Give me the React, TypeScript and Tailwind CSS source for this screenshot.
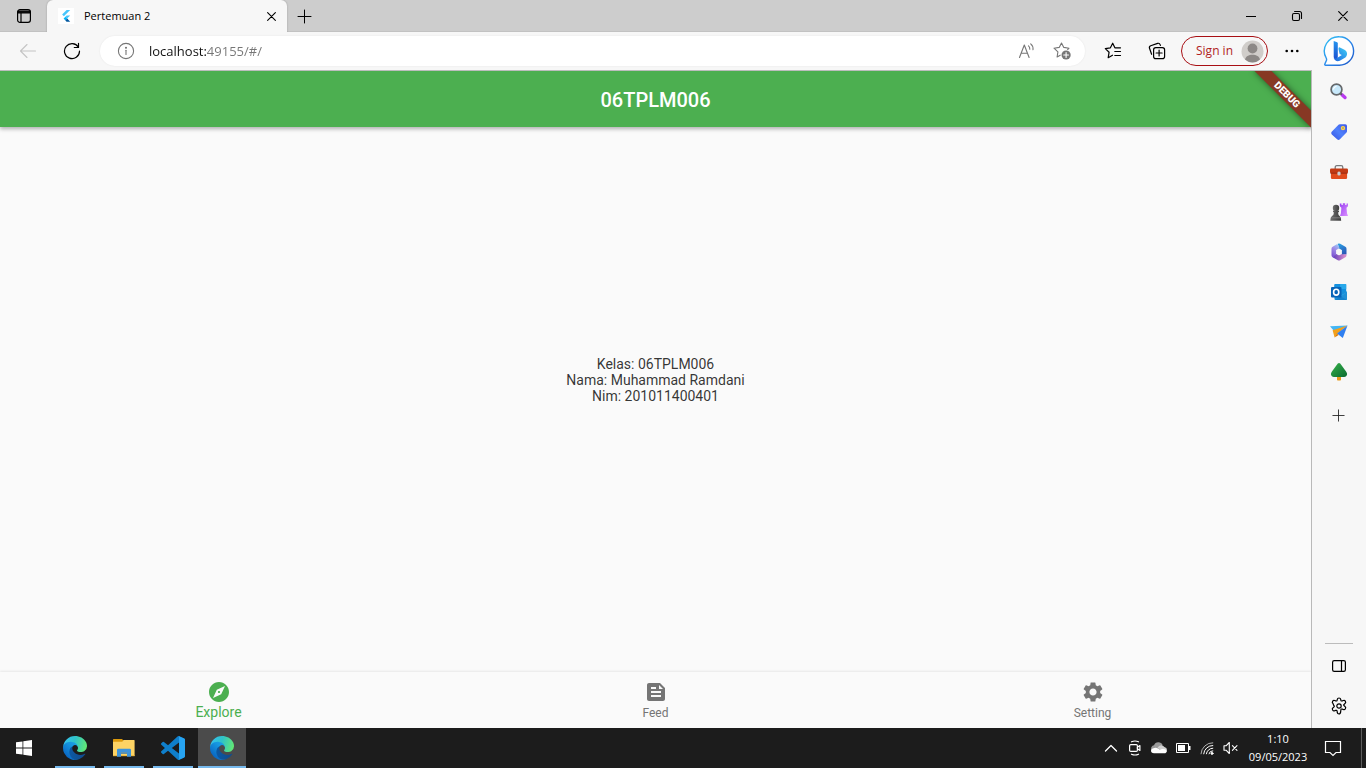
import React, { useState } from "react";
import { MdExplore, MdFeed, MdSettings } from "react-icons/md";

type IconProps = { className?: string };

const line = {
  fill: "none",
  stroke: "currentColor",
  strokeLinecap: "round" as const,
  strokeLinejoin: "round" as const,
};

/* ---------- Browser chrome icons ---------- */

const TabActionsIcon = () => (
  <svg width="16" height="16" viewBox="0 0 16 16" {...line} strokeWidth="1.2">
    <rect x="1.6" y="1.6" width="12.8" height="12.8" rx="2.4" />
    <path d="M2 3.2h12v1.6H2z" fill="currentColor" />
    <path d="M5 5v9" />
  </svg>
);

const FlutterIcon = () => (
  <svg width="16" height="16" viewBox="0 0 16 16">
    <rect width="16" height="16" fill="#fff" />
    <path d="M8.6 2h3.6L5.9 8.3 4.1 6.5z" fill="#47c5fb" />
    <path d="M8.6 7.5h3.6L9.1 10.6l-1.8-1.8z" fill="#47c5fb" />
    <path d="M5.6 10.6l1.8-1.8 1.8 1.8-1.8 1.8z" fill="#00b5f8" />
    <path d="M7.4 12.4l1.8-1.8 3 3.1H8.6z" fill="#00569e" />
  </svg>
);

const CloseIcon = ({ className }: IconProps) => (
  <svg className={className} viewBox="0 0 10 10" {...line} strokeWidth="1.2">
    <path d="M.7.7l8.6 8.6M9.3.7L.7 9.3" />
  </svg>
);

const PlusIcon = ({ className }: IconProps) => (
  <svg className={className} viewBox="0 0 15 15" {...line} strokeWidth="1">
    <path d="M7.5 1v13M1 7.5h13" />
  </svg>
);

const MinimizeIcon = () => (
  <svg width="10" height="10" viewBox="0 0 10 10" {...line}>
    <path d="M0 5.5h10" />
  </svg>
);

const RestoreIcon = () => (
  <svg width="12" height="12" viewBox="0 0 12 12" {...line} strokeWidth="1.1">
    <rect x="1.5" y="3.5" width="7" height="7" rx="1.4" />
    <path d="M3.6 1.5h4.9a2 2 0 0 1 2 2v4.9" />
  </svg>
);

const BackIcon = () => (
  <svg width="18" height="16" viewBox="0 0 18 16" {...line} strokeWidth="1.1">
    <path d="M16.5 8H1.5M8 1.5L1.5 8 8 14.5" />
  </svg>
);

const ReloadIcon = () => (
  <svg width="18" height="18" viewBox="0 0 18 18" {...line} strokeWidth="1.2">
    <path d="M16.5 9.2A7.500 7.500 0 1 1 15.400 5.200" />
    <path d="M15.500 1.300v4.200h-4.200" />
  </svg>
);

const InfoIcon = () => (
  <svg width="18" height="18" viewBox="0 0 18 18" {...line} strokeWidth="1.1">
    <circle cx="9" cy="9" r="7.6" />
    <path d="M9 8.2v4.3" />
    <circle cx="9" cy="5.7" r=".5" fill="currentColor" />
  </svg>
);

const ReadAloudIcon = () => (
  <svg width="18" height="18" viewBox="0 0 18 18" {...line} strokeWidth="1.1">
    <path d="M2.500 15.500L7.300 3l4.800 12.500M4.200 11.200h6.200" />
    <path d="M11.500 3.900a4 4 0 0 1 1.300 3.300M13.700 1.900a6.500 6.500 0 0 1 2.300 5.800" />
  </svg>
);

const AddFavoriteIcon = () => (
  <svg width="18" height="18" viewBox="0 0 18 18" {...line} strokeWidth="1.1">
    <path d="M7.200 13.200L4.100 15l.8-5.200L1 6.200l5.200-.8L8.500 1l2.300 4.400 5.200.8-1.300 1.300" />
    <circle cx="13.100" cy="13" r="4.600" fill="currentColor" stroke="none" />
    <path d="M13.100 10.600v4.800M10.700 13h4.800" stroke="#fff" />
  </svg>
);

const FavoritesIcon = () => (
  <svg width="18" height="18" viewBox="0 0 18 18" {...line} strokeWidth="1.2">
    <path d="M8.500 13.200L4.200 15.700l.9-5.500L1.300 6.600l5.100-.8L8.700 1.200l2.200 4.600h5.600" />
    <path d="M10.800 9.500h5.700M10.800 13.500h5.700" />
  </svg>
);

const CollectionsIcon = () => (
  <svg width="18" height="18" viewBox="0 0 18 18" {...line} strokeWidth="1.2">
    <rect x="5.600" y="5.600" width="11" height="11" rx="2.200" />
    <path d="M11.100 8v6M8.100 11h6" />
    <path d="M3.600 12.300L1.500 6.200a2 2 0 0 1 1.200-2.500l6.900-2.300a2 2 0 0 1 2.500 1.200l.3.800" />
  </svg>
);

const AvatarIcon = () => (
  <svg width="23" height="23" viewBox="0 0 23 23">
    <circle cx="11.500" cy="11.500" r="11" fill="#d0cdca" />
    <circle cx="11.500" cy="8.500" r="4.900" fill="#8c8886" />
    <path d="M4 19.600c.7-3.400 3.700-4.900 7.500-4.900s6.800 1.500 7.500 4.900a11 11 0 0 1-15 0z" fill="#8c8886" />
  </svg>
);

const MoreIcon = () => (
  <svg width="16" height="4" viewBox="0 0 16 4" fill="currentColor">
    <circle cx="2.700" cy="2" r="1.300" />
    <circle cx="8" cy="2" r="1.300" />
    <circle cx="13.300" cy="2" r="1.300" />
  </svg>
);

/* ---------- Edge sidebar icons ---------- */

const BingIcon = () => (
  <svg width="32" height="32" viewBox="0 0 32 32">
    <defs>
      <linearGradient id="bingRing" x1="0" y1="0" x2="1" y2="1">
        <stop offset="0" stopColor="#2fc3f4" />
        <stop offset=".55" stopColor="#2a86ea" />
        <stop offset="1" stopColor="#1b52c4" />
      </linearGradient>
      <linearGradient id="bingStem" x1="0" y1="0" x2="0" y2="1">
        <stop offset="0" stopColor="#2595ee" />
        <stop offset="1" stopColor="#1b4fd0" />
      </linearGradient>
      <linearGradient id="bingBowl" x1="1" y1="0" x2="0" y2="1">
        <stop offset="0" stopColor="#3fd0f5" />
        <stop offset="1" stopColor="#1e63e0" />
      </linearGradient>
    </defs>
    <path
      d="M16.300 1.700A14.300 14.300 0 1 1 16.300 30.300H2.600c-.8 0-1.100-.8-.7-1.400l1.500-3.400c.4-.8.300-1.500-.2-2.500A14.300 14.300 0 0 1 16.300 1.700z"
      fill="#fff"
      stroke="url(#bingRing)"
      strokeWidth="1.400"
    />
    <path d="M10.700 6l3.400 1.200q.7.400.7 1.200v14.100l-1.300 2.200q-2.800-.5-2.800-3.200z" fill="url(#bingStem)" />
    <path d="M16.400 12.300l4.600 2.300c3.400 1.700 4.200 5.400 1.400 7.900l-5.600 3.300c-2.500 1-5.300.1-6.100-2.700 2 1.100 3.300.2 4.200-.6l3.900-2.500-1.500-.7q-.6-.2-.8-.8l-1-4.600q-.2-1.600.900-1.600z" fill="url(#bingBowl)" />
  </svg>
);

const SearchToolIcon = () => (
  <svg width="20" height="20" viewBox="0 0 20 20">
    <path d="M13 12.800l3 2.700" stroke="#b93bf0" strokeWidth="3.400" strokeLinecap="round" />
    <path d="M11 11l1.800 1.700" stroke="#555" strokeWidth="1.800" />
    <circle cx="7.500" cy="7.500" r="5.400" fill="#c8e9fb" stroke="#66696c" strokeWidth="1.700" />
    <path d="M4.500 7.500a3 3 0 0 1 3-3" stroke="#fff" strokeWidth="1.200" fill="none" />
  </svg>
);

const ShoppingIcon = () => (
  <svg width="20" height="20" viewBox="0 0 20 20">
    <defs>
      <linearGradient id="tag" x1="1" y1="0" x2="0" y2="1">
        <stop offset="0" stopColor="#3d58e8" />
        <stop offset=".5" stopColor="#4f80fb" />
        <stop offset="1" stopColor="#3451e3" />
      </linearGradient>
    </defs>
    <path d="M10.800 2.200h5.500q1.700 0 1.700 1.700v5.300q0 .7-.5 1.200l-6.600 6.900q-1.200 1.200-2.500.2l-5.600-5.100q-1.300-1.300-.1-2.600L9.500 2.800q.6-.6 1.300-.6z" fill="url(#tag)" />
    <circle cx="14" cy="6.100" r="1.500" fill="#7a7f9a" stroke="#ffd447" strokeWidth="1.400" />
  </svg>
);

const ToolsIcon = () => (
  <svg width="20" height="20" viewBox="0 0 20 20">
    <path d="M6.200 7V5.400q0-1.700 1.600-1.700h4.400q1.600 0 1.600 1.700V7" fill="none" stroke="#77787b" strokeWidth="1.300" />
    <rect x="1.900" y="10" width="16.200" height="7" rx="1.200" fill="#e04b1c" />
    <rect x="1" y="6.500" width="18" height="4.800" rx="1.200" fill="#c23a14" />
    <path d="M1.500 11.200h17" stroke="#8f260c" strokeWidth=".8" />
    <rect x="8.400" y="9.400" width="3.200" height="4.200" rx="1.500" fill="#c9cdd2" />
  </svg>
);

const GamesIcon = () => (
  <svg width="20" height="20" viewBox="0 0 20 20">
    <defs>
      <linearGradient id="rook" x1="0" y1="0" x2="1" y2="1">
        <stop offset="0" stopColor="#9a3ff2" />
        <stop offset="1" stopColor="#dc93ff" />
      </linearGradient>
      <linearGradient id="pawn" x1="0" y1="0" x2="1" y2="0">
        <stop offset="0" stopColor="#707070" />
        <stop offset="1" stopColor="#3c3c3c" />
      </linearGradient>
    </defs>
    <path d="M10.800 1.600h1.700v1.400h1.300V1.200h2.400V3h1.300V1.600H19v2.600l-1.500 1.500.5 5.600 1 2.700h-8l.9-2.700.5-5.600-1.600-1.500z" fill="url(#rook)" />
    <circle cx="7" cy="6" r="3.200" fill="url(#pawn)" />
    <path d="M4 8.700h6v1.500H9q.2 2.800 1.600 3.900 1.600 1.300 1.600 4.600H1.300q0-3.300 1.700-4.600Q4.800 13 5 10.200H4z" fill="url(#pawn)" />
    <path d="M2.500 15.800h8.800" stroke="#8a8a8a" strokeWidth=".8" />
  </svg>
);

const OfficeIcon = () => (
  <svg width="20" height="20" viewBox="0 0 20 20" fill="none" strokeWidth="4.600" strokeLinejoin="round">
    <defs>
      <linearGradient id="m365a" x1="3" y1="14" x2="11" y2="3" gradientUnits="userSpaceOnUse">
        <stop offset="0" stopColor="#7b52d0" />
        <stop offset=".5" stopColor="#9d87e6" />
        <stop offset="1" stopColor="#9fd0f8" />
      </linearGradient>
      <linearGradient id="m365b" x1="9" y1="3" x2="16" y2="16" gradientUnits="userSpaceOnUse">
        <stop offset="0" stopColor="#2a9be0" />
        <stop offset="1" stopColor="#2b3ea8" />
      </linearGradient>
      <linearGradient id="m365c" x1="4" y1="14" x2="16" y2="14" gradientUnits="userSpaceOnUse">
        <stop offset="0" stopColor="#5f3dbb" />
        <stop offset="1" stopColor="#d58bcb" />
      </linearGradient>
    </defs>
    <path d="M15.200 12.200v1L10 16.200l-5.200-3" stroke="url(#m365c)" />
    <path d="M9.600 4L10 3.800l5.200 3v5.400" stroke="url(#m365b)" />
    <path d="M5.600 13.600l-.8-.4V6.800l4.600-2.700" stroke="url(#m365a)" />
  </svg>
);

const OutlookIcon = () => (
  <svg width="20" height="20" viewBox="0 0 20 20">
    <rect x="5.200" y="2" width="12" height="10" rx="1" fill="#1490df" />
    <path d="M11.200 2h6v5h-6z" fill="#28a8ea" />
    <path d="M5.500 9.500H18V17q0 1-1 1H6.500q-1 0-1-1z" fill="#1a8fd8" />
    <path d="M18 10v8l-7-4z" fill="#37b5f0" />
    <path d="M6 18l12-8v7q0 1-1 1z" fill="#1278c4" opacity=".6" />
    <rect x="2" y="5" width="10.500" height="10.500" rx="1" fill="#0864b8" />
    <ellipse cx="7.200" cy="10.200" rx="2.600" ry="2.900" fill="none" stroke="#fff" strokeWidth="1.600" />
  </svg>
);

const DropIcon = () => (
  <svg width="20" height="20" viewBox="0 0 20 20">
    <path d="M1 4.300L18.500 3.500 6 10.300z" fill="#43b6f5" />
    <path d="M3.600 8.300L18.500 3.500 8 12 5.600 15.500z" fill="#f2a01c" />
    <path d="M8 11.600L18.500 3.500 13.800 16z" fill="#2f7ff0" />
    <path d="M5.600 15.500L9.600 12.900 8 11.400z" fill="#d97706" />
  </svg>
);

const TreeIcon = () => (
  <svg width="20" height="20" viewBox="0 0 20 20">
    <defs>
      <linearGradient id="tree" x1="0" y1="0" x2="1" y2="1">
        <stop offset="0" stopColor="#37b34a" />
        <stop offset="1" stopColor="#0b6b31" />
      </linearGradient>
    </defs>
    <rect x="8" y="13" width="4" height="5.500" rx=".8" fill="#e79b1c" />
    <path d="M8.600 1.700q1.400-1.300 2.800 0l6 8.300q1.500 2.600-.3 4.200-.8.700-2 .7H4.900q-1.200 0-2-.7-1.800-1.600-.3-4.200z" fill="url(#tree)" />
  </svg>
);

const PanelIcon = () => (
  <svg width="16" height="16" viewBox="0 0 16 16" {...line} strokeWidth="1.200">
    <rect x="1.600" y="2.600" width="12.800" height="10.800" rx="1.600" />
    <path d="M10.500 3v10" />
  </svg>
);

const GearIcon = () => (
  <svg width="18" height="18" viewBox="0 0 18 18" {...line} strokeWidth="1.200">
    <path d="M7.300 2.300Q7.500 1 9 1t1.700 1.300l.2 1q.3 1 1.400.6l1-.4q1.300-.5 2.100.8t-.4 2.200l-.8.7q-1 .8 0 1.600l.8.7q1.200.9.400 2.200t-2.100.8l-1-.4q-1.100-.4-1.400.6l-.2 1.700Q10.500 17 9 17t-1.700-1.300l-.2-1.700q-.3-1-1.400-.6l-1 .4q-1.300.5-2.100-.8t.4-2.200l.8-.7q1-.8 0-1.600L3 6.500q-1.200-.9-.4-2.200t2.100-.8l1 .4q1.100.4 1.400-.6z" />
    <circle cx="9" cy="9" r="2.200" />
  </svg>
);

/* ---------- Taskbar icons ---------- */

const WindowsIcon = () => (
  <svg width="16" height="16" viewBox="0 0 16 16" fill="#fff">
    <path d="M0 2.300L6.500 1.400v6.200H0zM7.300 1.300L16 0v7.600H7.300zM0 8.400h6.500v6.200L0 13.700zM7.300 8.400H16V16l-8.700-1.300z" />
  </svg>
);

const EdgeIcon = ({ id }: { id: string }) => (
  <svg width="24" height="24" viewBox="0 0 256 256">
    <defs>
      <linearGradient id={`${id}-navy`} x1="63" y1="177" x2="241" y2="177" gradientUnits="userSpaceOnUse">
        <stop offset="0" stopColor="#0c59a4" />
        <stop offset="1" stopColor="#114a8b" />
      </linearGradient>
      <linearGradient id={`${id}-blue`} x1="157" y1="100" x2="46" y2="221" gradientUnits="userSpaceOnUse">
        <stop offset="0" stopColor="#1b9de2" />
        <stop offset=".3" stopColor="#1595df" />
        <stop offset="1" stopColor="#0a68c4" />
      </linearGradient>
      <linearGradient id={`${id}-green`} x1="0" y1="60" x2="256" y2="130" gradientUnits="userSpaceOnUse">
        <stop offset="0" stopColor="#35c1f1" />
        <stop offset=".45" stopColor="#2fc2c8" />
        <stop offset="1" stopColor="#66eb6e" />
      </linearGradient>
    </defs>
    <path
      d="M231.070 190.540c-3.380 1.760-6.850 3.350-10.410 4.760a100.200 100.200 0 0 1-35.260 6.360c-46.470 0-86.950-31.970-86.950-72.980A31.270 31.270 0 0 1 114.800 101.600c-42.030 1.770-52.830 45.570-52.830 71.230 0 72.560 66.870 79.920 81.280 79.920 7.770 0 19.480-2.260 26.520-4.490l1.290-.43a128.340 128.340 0 0 0 66.600-52.800 4 4 0 0 0-6.590-4.490z"
      fill={`url(#${id}-navy)`}
    />
    <path
      d="M105.730 241.420a79.200 79.200 0 0 1-22.740-21.340 80.720 80.720 0 0 1 29.530-120c3.120-1.470 8.450-4.130 15.540-4a32.350 32.350 0 0 1 25.690 13 31.880 31.880 0 0 1 6.360 18.660c0-.21 24.460-79.600-80-79.600-43.900 0-80 41.660-80 78.210a130.150 130.150 0 0 0 12.110 56 128 128 0 0 0 156.380 67.110 75.550 75.550 0 0 1-62.780-8z"
      fill={`url(#${id}-blue)`}
    />
    <path
      d="M152.330 148.860c-.81 1.050-3.300 2.500-3.300 5.660 0 2.610 1.700 5.120 4.720 7.230 14.380 10 41.490 8.680 41.560 8.680a59.560 59.560 0 0 0 30.270-8.350A61.380 61.380 0 0 0 256 109.160c.26-22.410-8-37.310-11.340-43.910C223.460 23.840 177.720 0 128 0A128 128 0 0 0 0 126.200c.48-36.540 36.800-66.050 80-66.050 3.500 0 23.460.34 42 10.070 16.340 8.580 24.900 18.940 30.850 29.210 6.180 10.670 7.280 24.150 7.280 29.520 0 5.370-2.740 13.330-7.800 19.910z"
      fill={`url(#${id}-green)`}
    />
  </svg>
);

const FolderIcon = () => (
  <svg width="24" height="24" viewBox="0 0 24 24">
    <path d="M1 3.500q0-.5.500-.5h8.300q.4 0 .6.300L11.500 5V7H1z" fill="#dd9a0c" />
    <path d="M1 5.700h9.300L11.500 4H22q.6 0 .6.600V20H1z" fill="#fdd364" />
    <path d="M1 19.200h21.600v1H1z" fill="#e8b640" />
    <path d="M5 20.700V14q0-1.200 1.200-1.200h11.600q1.200 0 1.200 1.200v6.700h-4v-4.200H9v4.200z" fill="#3e94da" />
    <path d="M9 16.500h6v1.200H9z" fill="#2471b8" />
  </svg>
);

const VsCodeIcon = () => (
  <svg width="24" height="24" viewBox="0 0 24 24">
    <path
      d="M23.150 2.587L18.210.210a1.494 1.494 0 0 0-1.705.290l-9.460 8.630-4.120-3.128a.999.999 0 0 0-1.276.057L.327 7.261A1 1 0 0 0 .326 8.740L3.899 12 .326 15.260a1 1 0 0 0 .001 1.479L1.650 17.940a.999.999 0 0 0 1.276.057l4.120-3.128 9.460 8.630a1.492 1.492 0 0 0 1.704.290l4.942-2.377A1.500 1.500 0 0 0 24 20.060V3.939a1.500 1.500 0 0 0-.850-1.352zm-5.146 14.861L10.826 12l7.178-5.448v10.896z"
      fill="#0f7fcb"
    />
    <path d="M18.004 1v22q0 .5-.6.900.4.100.8-.100l4.946-2.387A1.500 1.500 0 0 0 24 20.060V3.939a1.500 1.500 0 0 0-.850-1.352L18.210.210q-.4-.2-.8-.100.6.3.594.890z" fill="#27a4f2" />
  </svg>
);

const ChevronUpIcon = () => (
  <svg width="14" height="8" viewBox="0 0 14 8" {...line} strokeWidth="1.300">
    <path d="M1.500 7L7 1.500 12.500 7" />
  </svg>
);

const MeetNowIcon = () => (
  <svg width="16" height="16" viewBox="0 0 16 16" {...line} strokeWidth="1.200">
    <rect x="2.600" y="4.600" width="7.800" height="6.800" rx="1.200" />
    <path d="M10.400 7.300l2.500-1.700v4.800l-2.500-1.700M4.500 1.800q3.500-1.600 7 0M4.500 14.200q3.500 1.600 7 0" />
  </svg>
);

const CloudIcon = () => (
  <svg width="18" height="12" viewBox="0 0 18 12">
    <path d="M1.500 8A3.300 3.300 0 0 1 4 3.200 4.600 4.600 0 0 1 12.600 3L9 7z" fill="#9a9a9a" />
    <path d="M7.500 5.500Q11.500 1.500 14.400 5q2.600.7 2.600 3l-5 1z" fill="#cfcfcf" />
    <path d="M1 8.500q0-2 2.500-2.300 2.400-.8 4.500.3l2 1.100q3.500-1.500 7 .8-.2 2.800-2.800 2.800H4Q1 11.200 1 8.500z" fill="#fff" />
  </svg>
);

const BatteryIcon = () => (
  <svg width="16" height="10" viewBox="0 0 16 10" fill="none" stroke="#fff">
    <path d="M1.500.5h12v9h-12z" />
    <path d="M3 2h7v6H3z" fill="#fff" stroke="none" />
    <path d="M14 3h1.500v4H14" fill="#fff" stroke="none" />
  </svg>
);

const WifiIcon = () => (
  <svg width="14" height="14" viewBox="0 0 14 14" {...line} strokeWidth="1">
    <path d="M1 12.800A11.500 11.500 0 0 1 12.800 1.800" opacity=".65" />
    <path d="M3.700 12.800A9 9 0 0 1 12.800 4.500M6.400 12.800A6.300 6.300 0 0 1 12.800 7.200" />
    <path d="M9 12.800A3.700 3.700 0 0 1 12.800 9.800" />
    <circle cx="12" cy="12.400" r="1" fill="currentColor" />
  </svg>
);

const MutedIcon = () => (
  <svg width="16" height="14" viewBox="0 0 16 14" {...line} strokeWidth="1.100">
    <path d="M1 4.800h2L6.300 1.500v11L3 9.200H1zM9.400 4.700l4.600 4.600M14 4.700L9.400 9.300" />
  </svg>
);

const NotificationIcon = () => (
  <svg width="18" height="18" viewBox="0 0 18 18" {...line} strokeWidth="1.200">
    <path d="M1.500 2.500h15v11H12l-3 3-3-3H1.500z" strokeLinejoin="miter" />
  </svg>
);

/* ---------- Data ---------- */

const sidebarApps = [
  { label: "Search", Icon: SearchToolIcon },
  { label: "Shopping", Icon: ShoppingIcon },
  { label: "Tools", Icon: ToolsIcon },
  { label: "Games", Icon: GamesIcon },
  { label: "Microsoft 365", Icon: OfficeIcon },
  { label: "Outlook", Icon: OutlookIcon },
  { label: "Drop", Icon: DropIcon },
  { label: "E-tree", Icon: TreeIcon },
];

const navItems = [
  { label: "Explore", Icon: MdExplore },
  { label: "Feed", Icon: MdFeed },
  { label: "Setting", Icon: MdSettings },
];

/* ---------- Sections ---------- */

function TabStrip() {
  return (
    <header className="flex h-8 shrink-0 items-stretch bg-[#cdcdcd] shadow-[inset_0_-1px_0_#c2c2c2]">
      <button aria-label="Tab actions" className="flex w-[47px] items-center justify-center">
        <TabActionsIcon />
      </button>
      <div className="flex w-60 items-center rounded-t-md bg-[#f7f7f7] pr-2.5 pl-[11px] shadow-[0_0_2px_rgba(0,0,0,0.25)]">
        <FlutterIcon />
        <span className="ml-2.5 flex-1 text-[11px]">Pertemuan 2</span>
        <button aria-label="Close tab" className="flex h-4 w-3 items-center justify-center">
          <CloseIcon className="size-[9px]" />
        </button>
      </div>
      <button aria-label="New tab" className="flex w-[35px] items-center justify-center">
        <PlusIcon className="size-[15px]" />
      </button>
      <div className="flex-1" />
      <button aria-label="Minimize" className="flex w-[46px] items-center justify-center">
        <MinimizeIcon />
      </button>
      <button aria-label="Restore" className="flex w-[46px] items-center justify-center">
        <RestoreIcon />
      </button>
      <button aria-label="Close" className="flex w-[46px] items-center justify-center">
        <CloseIcon className="size-2.5" />
      </button>
    </header>
  );
}

function Toolbar() {
  const [url, setUrl] = useState("localhost:49155/#/");
  return (
    <div className="flex h-[39px] shrink-0 items-center border-b border-[#bdbdbd] bg-[#f7f7f7] pl-1.5">
      <button aria-label="Back" className="flex h-8 w-11 items-center justify-center text-[#c4c4c4]">
        <BackIcon />
      </button>
      <button aria-label="Refresh" className="flex h-8 w-11 items-center justify-center">
        <ReloadIcon />
      </button>
      <div className="mx-1.5 flex h-[30px] flex-1 items-center rounded-full bg-white pr-3.5 pl-[17px] text-[#767676] shadow-[0_0_2px_rgba(0,0,0,0.08)]">
        <button aria-label="Site information">
          <InfoIcon />
        </button>
        <input
          aria-label="Address"
          value={url}
          onChange={(e) => setUrl(e.target.value)}
          className="ml-3.5 min-w-0 flex-1 bg-[linear-gradient(to_right,#111_57px,#767676_57px)] bg-clip-text pt-px text-[13px] text-transparent caret-black outline-none"
        />
        <button aria-label="Read aloud" className="mr-[18px]">
          <ReadAloudIcon />
        </button>
        <button aria-label="Add to favorites">
          <AddFavoriteIcon />
        </button>
      </div>
      <button aria-label="Favorites" className="flex h-8 w-11 items-center justify-center">
        <FavoritesIcon />
      </button>
      <button aria-label="Collections" className="flex h-8 w-11 items-center justify-center">
        <CollectionsIcon />
      </button>
      <button className="ml-0.5 flex h-[30px] w-[87px] items-center justify-between rounded-full border border-[#a80f14] pr-[3px] pl-3.5 text-[12px] text-[#b01e24]">
        <span>Sign in</span>
        <AvatarIcon />
      </button>
      <button aria-label="Settings and more" className="ml-1 flex h-8 w-10 items-center justify-center">
        <MoreIcon />
      </button>
    </div>
  );
}

function FlutterPage() {
  const [active, setActive] = useState("Explore");
  return (
    <div className="relative flex min-h-0 flex-1 flex-col overflow-hidden border-r border-[#b9b9b9] bg-[#fafafa] font-['Roboto',sans-serif]">
      <div className="z-10 flex h-14 shrink-0 items-center justify-center bg-[#4caf50] pt-0.5 shadow-[0_2px_4px_rgba(0,0,0,0.3)]">
        <h1 className="text-[20px] font-medium text-white">06TPLM006</h1>
      </div>
      <div className="absolute top-[18px] -right-4 z-20 flex h-3 w-20 rotate-45 items-center justify-center bg-[#873824] text-[10px] leading-3 font-black text-white shadow-[0_0_6px_rgba(0,0,0,0.5)]">
        DEBUG
      </div>
      <main className="flex flex-1 flex-col items-center justify-center pb-10 text-center text-[14px] leading-4 text-black/80">
        <p>Kelas: 06TPLM006</p>
        <p>Nama: Muhammad Ramdani</p>
        <p>Nim: 201011400401</p>
      </main>
      <nav className="flex h-14 shrink-0 bg-[#fafafa] shadow-[0_-1px_2px_rgba(0,0,0,0.08)]">
        {navItems.map(({ label, Icon }) => (
          <button
            key={label}
            onClick={() => setActive(label)}
            className={
              active === label
                ? "flex flex-1 flex-col items-center pt-2 text-[14px] leading-4 text-[#4caf50]"
                : "flex flex-1 flex-col items-center pt-2 text-[12px] leading-[18px] text-[#757575]"
            }
          >
            <Icon className="size-6" />
            <span>{label}</span>
          </button>
        ))}
      </nav>
    </div>
  );
}

function EdgeSidebar() {
  const item = "flex h-10 w-full shrink-0 items-center justify-center";
  return (
    <aside className="flex w-[54px] shrink-0 flex-col items-center bg-[#f7f7f7] pb-0.5">
      <button aria-label="Discover" className="flex h-10 w-full shrink-0 items-center justify-center pb-0.5">
        <BingIcon />
      </button>
      {sidebarApps.map(({ label, Icon }) => (
        <button key={label} aria-label={label} className={item}>
          <Icon />
        </button>
      ))}
      <button aria-label="Customize" className="mt-[3px] flex h-10 w-full shrink-0 items-center justify-center pr-0.5 text-[#222]">
        <PlusIcon className="size-[13px]" />
      </button>
      <div className="flex-1" />
      <hr className="mb-0.5 w-7 border-[#bcbcbc]" />
      <button aria-label="Hide sidebar" className={item}>
        <PanelIcon />
      </button>
      <button aria-label="Settings" className={item}>
        <GearIcon />
      </button>
    </aside>
  );
}

function TaskButton({ label, active, children }: { label: string; active?: boolean; children: React.ReactNode }) {
  return (
    <button
      aria-label={label}
      className={
        active
          ? "flex h-10 w-12 flex-col items-center bg-[#4b4b4b]"
          : "flex h-10 w-12 flex-col items-center"
      }
    >
      <span className="flex flex-1 items-center pt-0.5">{children}</span>
      <span className={active ? "h-0.5 w-full bg-[#76b9ed]" : "h-0.5 w-10 bg-[#76b9ed]"} />
    </button>
  );
}

function Taskbar() {
  const tray = "flex h-10 w-6 items-center justify-center";
  return (
    <footer className="flex h-10 shrink-0 items-center bg-[#1c1c1c] text-white">
      <button aria-label="Start" className="mr-[3px] flex h-10 w-12 items-center justify-center">
        <WindowsIcon />
      </button>
      <div className="flex gap-px">
        <TaskButton label="Microsoft Edge">
          <EdgeIcon id="edge-a" />
        </TaskButton>
        <TaskButton label="File Explorer">
          <FolderIcon />
        </TaskButton>
        <TaskButton label="Visual Studio Code">
          <VsCodeIcon />
        </TaskButton>
        <TaskButton label="Pertemuan 2 - Microsoft Edge" active>
          <EdgeIcon id="edge-b" />
        </TaskButton>
      </div>
      <div className="flex-1" />
      <button aria-label="Show hidden icons" className={tray}>
        <ChevronUpIcon />
      </button>
      <button aria-label="Meet Now" className={tray}>
        <MeetNowIcon />
      </button>
      <button aria-label="OneDrive" className={tray}>
        <CloudIcon />
      </button>
      <button aria-label="Battery" className={tray}>
        <BatteryIcon />
      </button>
      <button aria-label="Network" className={tray}>
        <WifiIcon />
      </button>
      <button aria-label="Volume muted" className={tray}>
        <MutedIcon />
      </button>
      <button className="flex w-[70px] flex-col items-center text-[11px] leading-[18px]">
        <span>1:10</span>
        <span>09/05/2023</span>
      </button>
      <button aria-label="Notifications" className="flex h-10 w-10 items-center justify-center">
        <NotificationIcon />
      </button>
      <button aria-label="Show desktop" className="ml-2 h-10 w-[5px] border-l border-[#5c5c5c]" />
    </footer>
  );
}

export default function App() {
  return (
    <div className="flex h-screen flex-col overflow-hidden font-['Open_Sans','Noto_Sans',sans-serif] text-black">
      <TabStrip />
      <div className="flex min-h-0 flex-1">
        <div className="flex min-w-0 flex-1 flex-col">
          <Toolbar />
          <FlutterPage />
        </div>
        <EdgeSidebar />
      </div>
      <Taskbar />
    </div>
  );
}
